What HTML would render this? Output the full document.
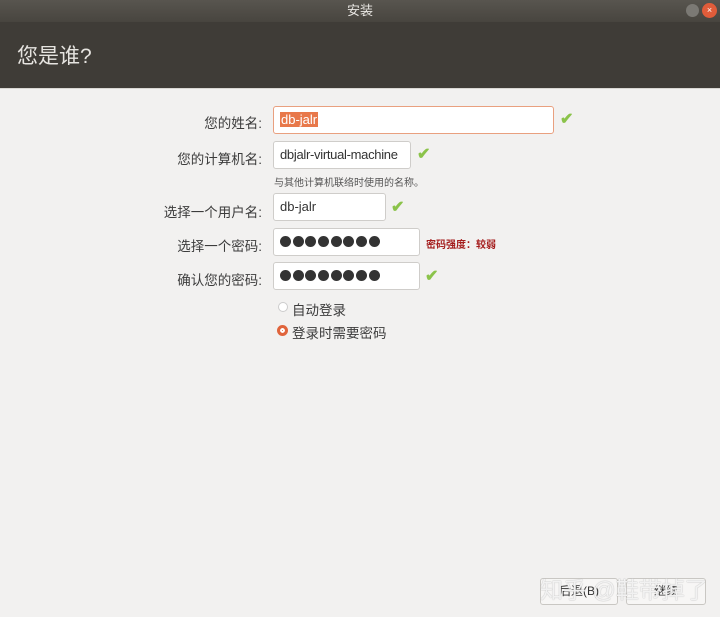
<!DOCTYPE html>
<html><head><meta charset="utf-8"><style>
*{margin:0;padding:0;box-sizing:border-box}
body{width:720px;height:617px;overflow:hidden;background:#f2f1f0;font-family:"Liberation Sans","Noto Sans CJK SC",sans-serif;position:relative;color:#3c3c3c}
.tb{position:absolute;left:0;top:0;width:720px;height:22px;background:linear-gradient(#58554f,#48453f);color:#e8e6e2;font-size:13px;text-align:center;line-height:22px}
.hd{position:absolute;left:0;top:22px;width:720px;height:66px;background:#3f3c37;color:#e6e4e0;font-size:21px;padding:18px 0 0 17px}
.min{position:absolute;left:686px;top:4px;width:13px;height:13px;border-radius:50%;background:#7b7974}
.cls{position:absolute;left:702px;top:3px;width:15px;height:15px;border-radius:50%;background:#e05c3a;color:#fff;font-size:9px;line-height:15px;text-align:center}
.hl{position:absolute;left:0;top:88px;width:720px;height:1px;background:#d9d7d3}
.lb{position:absolute;font-size:13.5px;color:#3c3c3c;text-align:right;width:200px;left:62px}
.in{position:absolute;height:28px;border:1px solid #cfcdca;border-radius:3px;background:#fff;font-size:13px;line-height:26px;padding-left:6px;color:#333;white-space:nowrap;overflow:hidden}
.ck{position:absolute;color:#8bc34a;font-size:16px;font-weight:bold}
.d{display:inline-block;width:11px;height:11px;border-radius:50%;background:#333;margin-right:1.7px;vertical-align:middle;margin-top:-2px}
.btn{position:absolute;top:578px;height:27px;border:1px solid #c9c7c3;border-radius:3px;background:#f7f6f5;font-size:12px;text-align:center;line-height:25px;color:#333}
.wm{position:absolute;left:540px;top:571px;font-size:23px;color:rgba(255,255,255,.85);text-shadow:0 0 1px #999;white-space:nowrap}
</style></head><body>
<div class="tb">安装</div><div class="min"></div><div class="cls">×</div>
<div class="hd">您是谁?</div><div class="hl"></div>

<div class="lb" style="top:112px">您的姓名:</div>
<div class="in" style="left:273px;top:106px;width:281px;border-color:#e9a07f"><span style="background:#e8784a;color:#fff;padding:0 1px">db-jalr</span></div>
<div class="ck" style="left:560px;top:109px">✔</div>

<div class="lb" style="top:148px">您的计算机名:</div>
<div class="in" style="left:273px;top:141px;width:138px;letter-spacing:-0.3px">dbjalr-virtual-machine</div>
<div class="ck" style="left:417px;top:144px">✔</div>
<div style="position:absolute;left:274px;top:174px;font-size:10px;color:#555">与其他计算机联络时使用的名称。</div>

<div class="lb" style="top:201px">选择一个用户名:</div>
<div class="in" style="left:273px;top:193px;width:113px">db-jalr</div>
<div class="ck" style="left:391px;top:197px">✔</div>

<div class="lb" style="top:235px">选择一个密码:</div>
<div class="in" style="left:273px;top:228px;width:147px"><span class="d"></span><span class="d"></span><span class="d"></span><span class="d"></span><span class="d"></span><span class="d"></span><span class="d"></span><span class="d"></span></div>
<div style="position:absolute;left:426px;top:236px;font-size:10px;color:#a41c1c;font-weight:bold">密码强度：较弱</div>

<div class="lb" style="top:269px">确认您的密码:</div>
<div class="in" style="left:273px;top:262px;width:147px"><span class="d"></span><span class="d"></span><span class="d"></span><span class="d"></span><span class="d"></span><span class="d"></span><span class="d"></span><span class="d"></span></div>
<div class="ck" style="left:425px;top:266px">✔</div>

<div style="position:absolute;left:278px;top:302px;width:10px;height:10px;border-radius:50%;border:1px solid #ccc;background:#fff"></div>
<div style="position:absolute;left:292px;top:299px;font-size:13.5px">自动登录</div>
<div style="position:absolute;left:277px;top:325px;width:11px;height:11px;border-radius:50%;background:#e0643c;border:3px solid #e0643c;box-shadow:inset 0 0 0 2px #fff"></div>
<div style="position:absolute;left:292px;top:322px;font-size:13.5px">登录时需要密码</div>

<div class="btn" style="left:540px;width:78px">后退(B)</div>
<div class="btn" style="left:626px;width:80px">继续</div>
<div class="wm">知乎 @鞋带掉了</div>
</body></html>
